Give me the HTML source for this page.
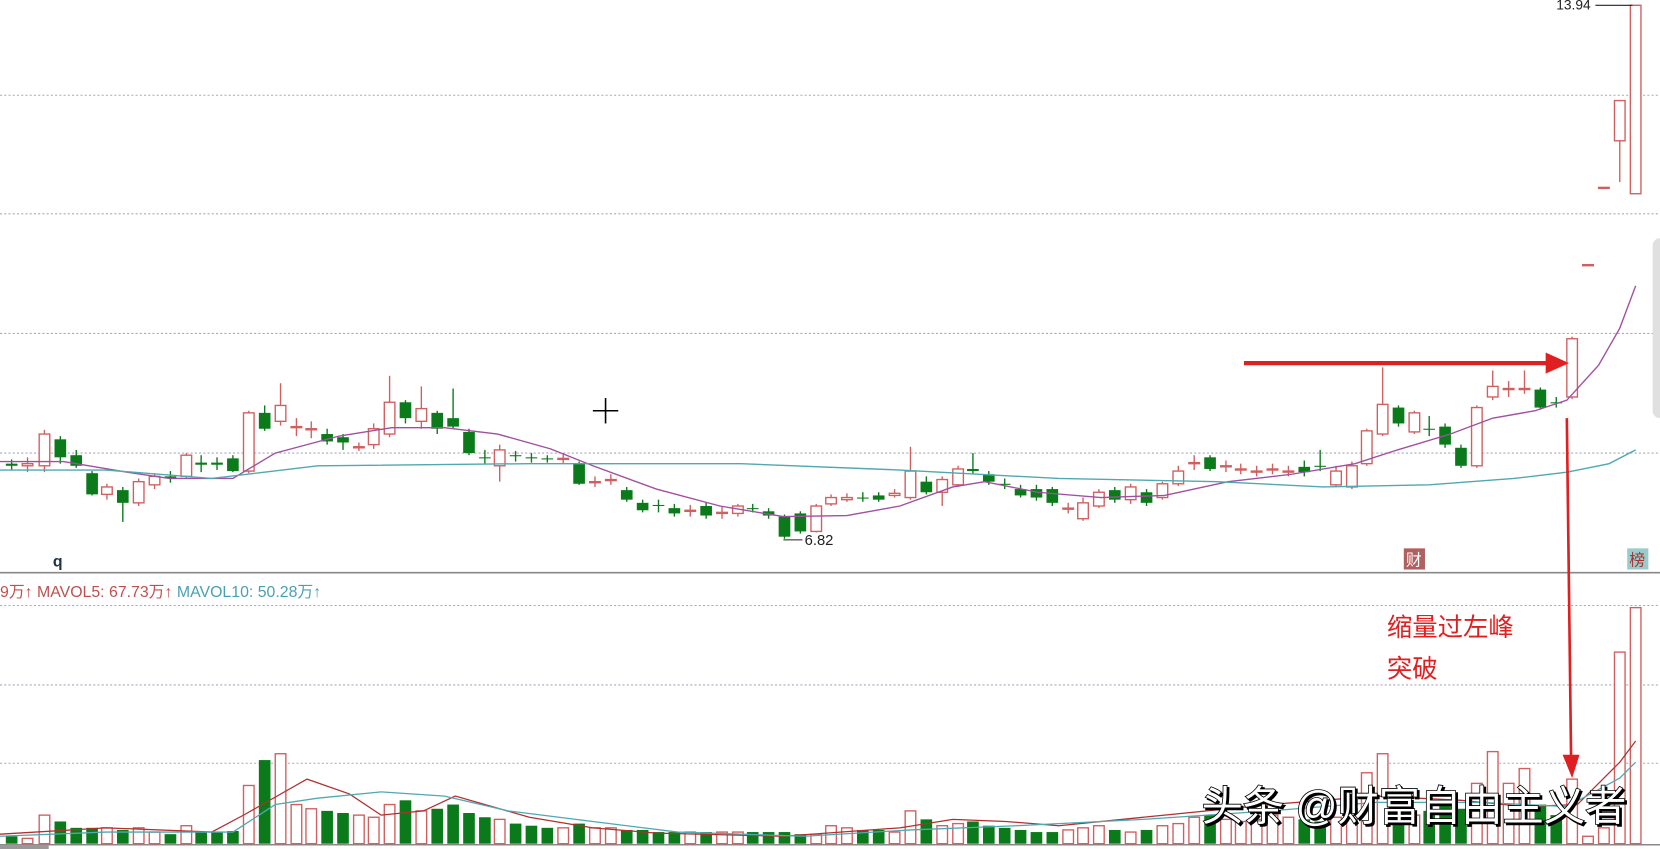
<!DOCTYPE html>
<html><head><meta charset="utf-8"><style>
html,body{margin:0;padding:0;background:#fff;overflow:hidden}
svg{display:block}
</style></head><body>
<svg id="s" width="1660" height="849" viewBox="0 0 1568 802" preserveAspectRatio="none" xmlns="http://www.w3.org/2000/svg" font-family="Liberation Sans, Noto Sans CJK SC, sans-serif">
<g stroke="#aab" stroke-width="1" stroke-dasharray="2,2">
<line x1="0" y1="90" x2="1568" y2="90"/><line x1="0" y1="202" x2="1568" y2="202"/><line x1="0" y1="315" x2="1568" y2="315"/><line x1="0" y1="428" x2="1568" y2="428"/>
<line x1="0" y1="572" x2="1568" y2="572"/><line x1="0" y1="647" x2="1568" y2="647"/><line x1="0" y1="721" x2="1568" y2="721"/>
</g>
<line x1="0" y1="541" x2="1568" y2="541" stroke="#888" stroke-width="1.5"/>
<line x1="0" y1="798" x2="1568" y2="798" stroke="#888" stroke-width="1.5"/>
<rect x="0" y="798" width="46" height="4" fill="#999"/>
<g id="c"></g>
<text x="0" y="564" font-size="15" fill="#c05050">9万↑ MAVOL5: 67.73万↑ <tspan fill="#4aa0b0">MAVOL10: 50.28万↑</tspan></text>
<text x="50" y="535" font-size="15" font-weight="bold" fill="#234">q</text>
<text x="1470" y="9" font-size="13" fill="#222">13.94</text>
<line x1="1507" y1="5" x2="1542" y2="5" stroke="#222"/>
<line x1="740" y1="510" x2="758" y2="510" stroke="#222"/>
<text x="760" y="515" font-size="14" fill="#222">6.82</text>
<line x1="560" y1="388" x2="584" y2="388" stroke="#000" stroke-width="1.5"/><line x1="572" y1="376" x2="572" y2="400" stroke="#000" stroke-width="1.5"/>
<rect x="1326" y="518" width="20" height="20" fill="#b06060"/><text x="1328" y="534" font-size="15" fill="#fff">财</text>
<rect x="1537" y="518" width="20" height="20" fill="#9cc"/><text x="1539" y="534" font-size="15" fill="#a33">榜</text>
<line x1="1175" y1="343" x2="1462" y2="343" stroke="#e02020" stroke-width="4"/>
<polygon points="1460,333 1482,343 1460,353" fill="#e02020"/>
<line x1="1480" y1="395" x2="1484" y2="715" stroke="#e02020" stroke-width="2.5"/>
<polygon points="1476,713 1492,713 1485,735" fill="#e02020"/>
<text x="1310" y="601" font-size="24" fill="#e02020">缩量过左峰</text>
<text x="1310" y="640" font-size="24" fill="#e02020">突破</text>
<rect x="1561" y="225" width="14" height="170" rx="7" fill="#e0e0e0"/>
<text x="1135" y="775" font-size="39" fill="#fff" stroke="#000" stroke-width="1.5" paint-order="stroke" style="text-shadow:2px 2px 0 #000">头条 @财富自由主义者</text>
</svg>
<script>
var X=[11,26,42,57,72,87,101,116,131,146,161,176,190,205,220,235,250,265,280,294,309,324,339,353,368,383,398,413,428,443,458,472,487,502,517,532,547,562,577,592,607,622,637,652,667,682,697,711,726,741,756,771,785,800,815,830,845,860,875,890,905,919,934,949,964,979,994,1009,1023,1038,1053,1068,1083,1098,1113,1128,1143,1158,1172,1187,1202,1217,1232,1247,1262,1277,1291,1306,1321,1336,1350,1365,1380,1395,1410,1425,1440,1455,1470,1485,1500,1515,1530,1545];
var C=[[438,440,434,444,0],[438,440,432,446,1],[410,440,406,446,1],[415,432,412,438,0],[430,440,425,442,0],[447,467,445,468,0],[460,467,457,472,1],[463,475,460,493,0],[455,475,452,478,1],[450,458,447,462,1],[450,452,445,456,0],[430,450,428,452,1],[437,439,430,446,0],[437,439,432,444,0],[433,445,430,446,0],[390,445,388,447,1],[390,405,383,407,0],[383,398,362,402,1],[403,404,395,412,1],[405,406,398,414,1],[410,417,405,420,0],[413,418,410,425,0],[422,423,418,426,1],[405,420,400,424,1],[380,410,355,413,1],[380,395,378,400,0],[386,398,365,405,1],[390,405,388,410,0],[395,403,367,405,0],[408,428,405,430,0],[432,433,425,438,0],[425,440,420,455,1],[430,431,426,436,0],[432,433,428,437,0],[433,434,430,437,0],[433,434,428,438,1],[438,457,436,458,0],[455,456,450,460,1],[453,454,448,458,1],[463,472,460,474,0],[475,482,472,484,0],[477,478,472,484,0],[480,485,476,488,0],[482,483,477,488,1],[478,487,475,490,0],[484,485,478,490,1],[478,485,476,488,1],[480,481,476,484,0],[483,487,480,490,0],[488,507,486,509,0],[485,502,483,504,0],[478,502,476,503,1],[470,476,467,478,1],[470,472,466,474,1],[470,471,465,474,0],[468,472,465,474,0],[466,468,462,470,1],[445,470,422,472,1],[455,465,450,467,0],[453,465,450,478,1],[443,458,440,460,1],[443,445,428,448,0],[448,455,445,458,0],[457,458,452,462,0],[462,468,458,470,0],[462,470,458,473,0],[462,475,460,478,0],[480,481,475,485,1],[475,490,470,492,1],[465,478,462,480,1],[463,472,460,475,0],[460,472,457,476,1],[465,475,462,478,0],[457,470,455,472,1],[445,457,440,459,1],[437,438,430,444,1],[432,443,430,445,0],[440,441,435,446,1],[443,444,438,448,1],[445,446,440,450,1],[443,444,438,448,1],[445,446,440,450,1],[441,446,435,450,0],[440,441,425,445,0],[445,458,440,460,1],[440,460,436,462,1],[407,438,405,440,1],[382,410,347,412,1],[385,400,383,403,0],[390,408,388,410,1],[405,406,393,412,0],[403,420,400,423,0],[423,440,420,442,0],[385,440,383,442,1],[365,375,350,378,1],[367,368,360,375,1],[367,368,350,372,1],[368,385,366,387,0],[380,381,375,385,0],[320,375,318,377,1],[250,251,250,251,1],[177,178,177,178,1],[95,133,95,172,1],[5,183,5,183,1]];
var V=[790,792,770,776,782,782,782,784,782,786,788,780,786,786,785,742,718,712,760,764,766,768,770,772,760,756,766,764,760,768,772,774,778,780,782,782,778,782,782,784,784,786,786,786,786,786,786,786,786,786,788,788,780,782,784,784,786,766,774,780,778,776,780,782,784,786,786,784,782,780,784,786,784,780,778,772,770,774,776,774,770,772,774,776,772,764,730,712,764,770,766,758,764,740,710,740,726,760,770,736,790,782,616,574];
var g=document.getElementById('c'),h='';
var R="#d06060",G="#0a7a1a";
for(var i=0;i<X.length;i++){var x=X[i],c=C[i],col=c[4]?R:G;
 var bh=Math.max(c[1]-c[0],1);
 h+='<line x1="'+x+'" y1="'+c[2]+'" x2="'+x+'" y2="'+c[3]+'" stroke="'+col+'" stroke-width="1.3"/>';
 if(c[4]) h+='<rect x="'+(x-5)+'" y="'+c[0]+'" width="10" height="'+bh+'" fill="#fff" stroke="'+R+'" stroke-width="1.3"/>';
 else h+='<rect x="'+(x-5.5)+'" y="'+c[0]+'" width="11" height="'+bh+'" fill="'+G+'"/>';
 var vt=V[i],vh=797-vt;
 if(c[4]) h+='<rect x="'+(x-5)+'" y="'+vt+'" width="10" height="'+vh+'" fill="#fff" stroke="'+R+'" stroke-width="1.3"/>';
 else h+='<rect x="'+(x-5.5)+'" y="'+vt+'" width="11" height="'+vh+'" fill="'+G+'"/>';
}
h+='<polyline fill="none" stroke="#a050a0" stroke-width="1.3" points="0,436 60,436 120,446 160,452 220,452 260,428 320,412 370,404 420,404 470,410 520,424 560,440 620,462 680,478 740,488 800,487 850,478 900,460 930,455 980,465 1040,470 1100,468 1160,455 1220,448 1280,438 1320,425 1370,410 1410,395 1450,388 1480,378 1510,345 1530,310 1545,270"/>';
h+='<polyline fill="none" stroke="#50a8b0" stroke-width="1.3" points="0,444 100,444 200,452 300,440 500,438 700,438 850,444 1000,452 1150,455 1250,460 1350,458 1430,452 1480,446 1520,438 1545,425"/>';
h+='<polyline fill="none" stroke="#b03030" stroke-width="1.2" points="0,788 100,782 200,786 230,770 290,736 330,750 360,770 400,766 430,752 500,772 560,782 620,787 740,790 850,782 900,774 950,776 1000,780 1100,770 1200,760 1300,752 1380,756 1440,762 1490,760 1530,720 1545,700"/>';
h+='<polyline fill="none" stroke="#50a8b0" stroke-width="1.2" points="0,790 100,786 220,786 260,760 300,754 360,748 420,752 480,766 560,776 640,786 760,790 860,784 960,780 1080,774 1200,766 1300,758 1400,758 1480,762 1530,735 1545,720"/>';
g.innerHTML=h;
</script>
</body></html>
